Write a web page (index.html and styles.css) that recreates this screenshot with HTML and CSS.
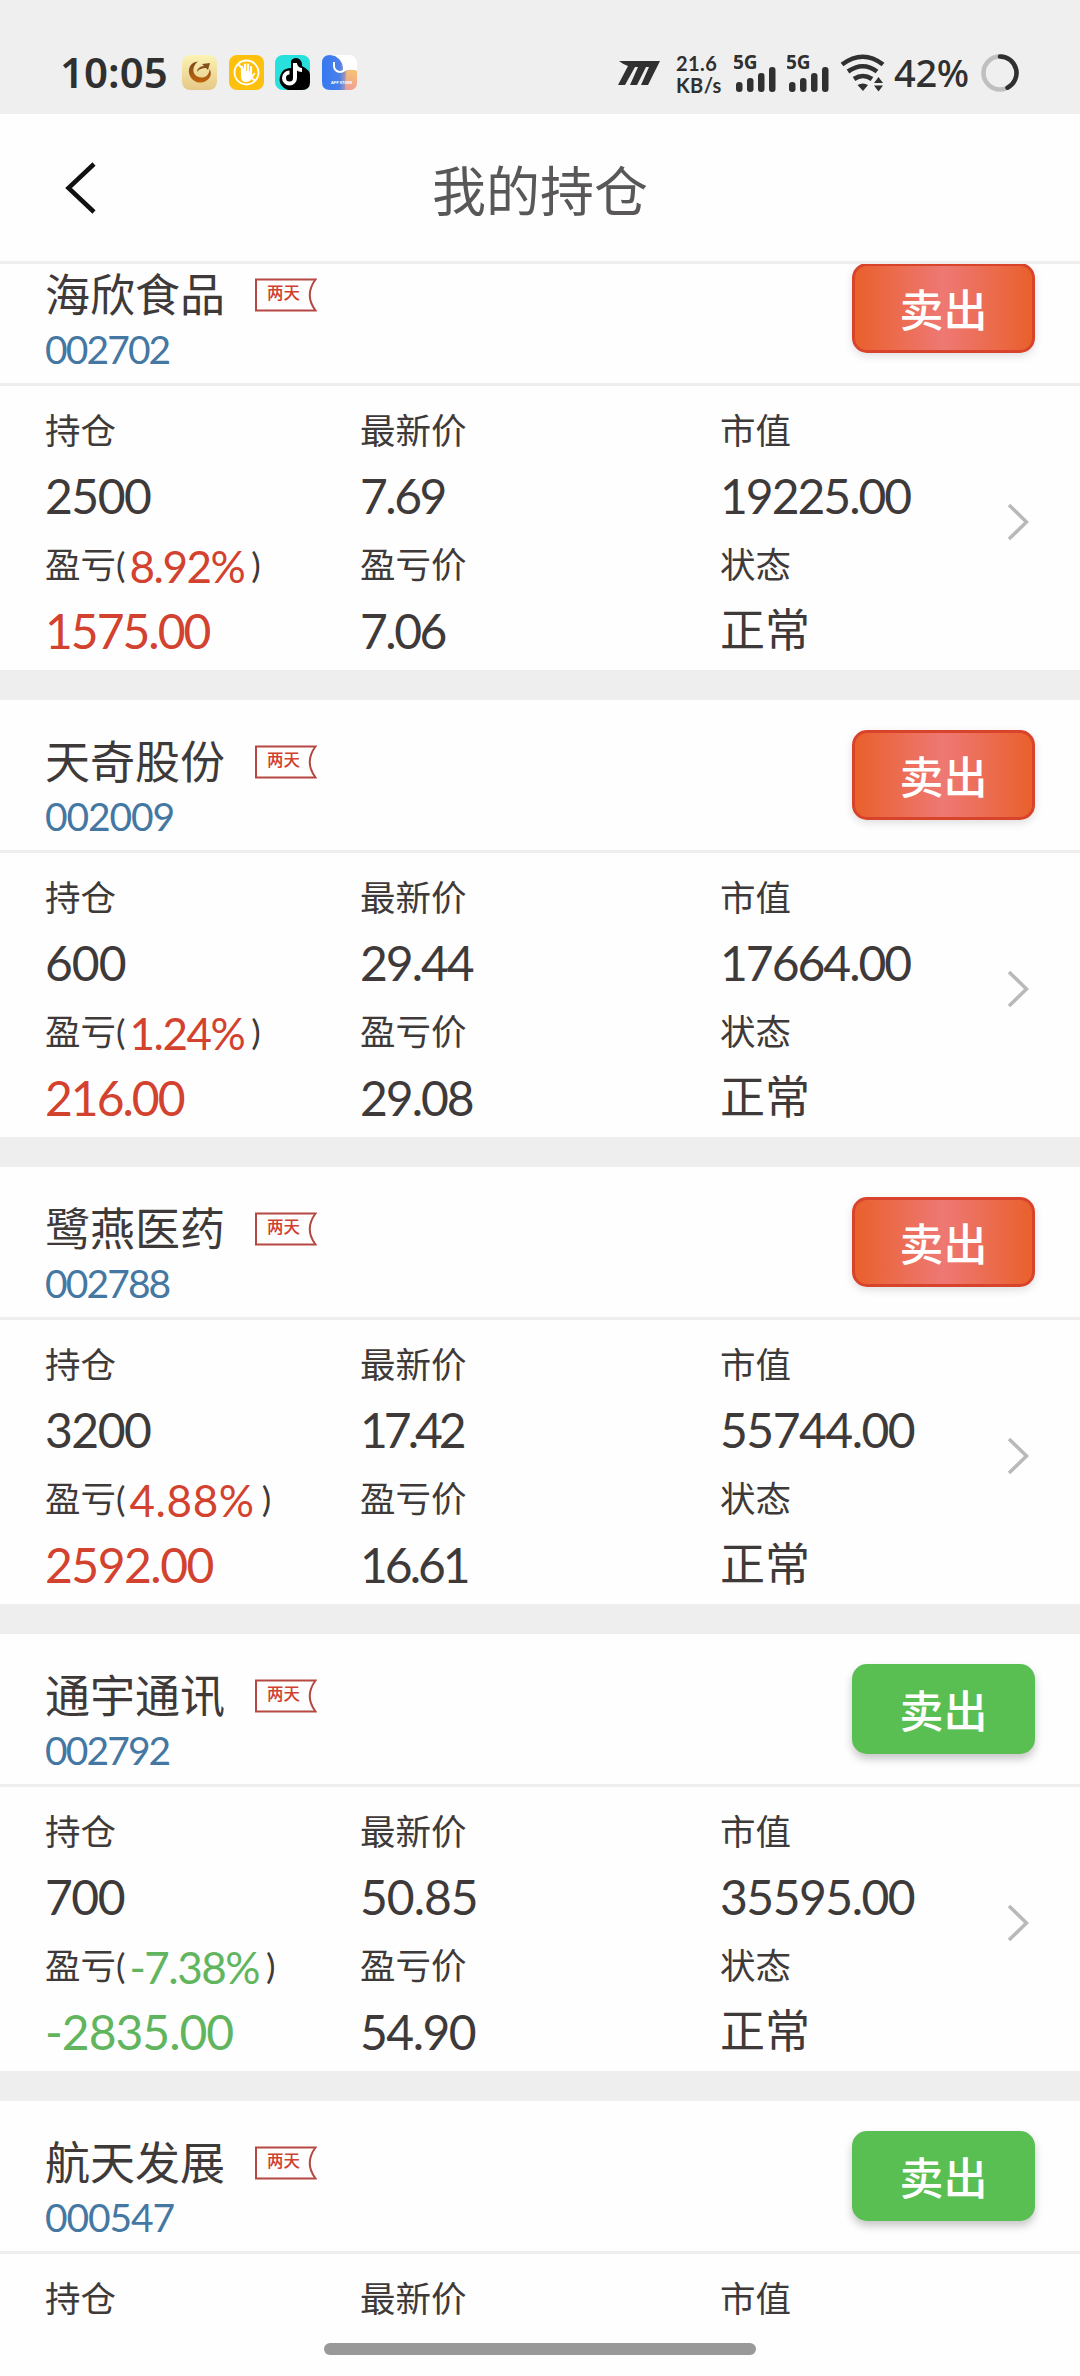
FILE: index.html
```html
<!DOCTYPE html>
<html lang="zh-CN">
<head>
<meta charset="utf-8">
<title>我的持仓</title>
<link rel="stylesheet" href="styles.css">
</head>
<body>
<svg width="0" height="0" class="defs">
  <defs>
    <linearGradient id="gold" x1="0" y1="0" x2="0" y2="1"><stop offset="0" stop-color="#fbf3b4"/><stop offset="1" stop-color="#e6c887"/></linearGradient>
    <linearGradient id="bronze" x1="0" y1="0" x2="0" y2="1"><stop offset="0" stop-color="#7c4a1c"/><stop offset="1" stop-color="#c0650e"/></linearGradient>
    <linearGradient id="store" x1="0" y1="0" x2="1" y2="0"><stop offset="0" stop-color="#3579f0"/><stop offset=".5" stop-color="#4a80ea"/><stop offset=".75" stop-color="#d8a09a"/><stop offset="1" stop-color="#f6a58e"/></linearGradient>
    <linearGradient id="peach" x1="0" y1="0" x2="0" y2="1"><stop offset="0" stop-color="#f8cf68"/><stop offset="1" stop-color="#f79b96"/></linearGradient>
    <symbol id="flag" viewBox="0 0 62 34"><path d="M1 1.5H60.5Q49 17 60.5 32.5H1Z" fill="none" stroke="#b54843" stroke-width="2"/></symbol>
    <symbol id="next" viewBox="0 0 22 38"><path d="M2 2 19.500 19 2 36" fill="none" stroke="#b9b9b9" stroke-width="3.500"/></symbol>
    <symbol id="signal" viewBox="0 0 44 38">
      <text x="-1" y="14" class="net">5G</text>
      <g fill="#303030"><rect x="2" y="27" width="6.500" height="10" rx="3"/><rect x="13" y="23" width="6.500" height="14" rx="3"/><rect x="24" y="18" width="6.500" height="19" rx="3"/><rect x="35" y="12" width="6.500" height="25" rx="3"/></g>
    </symbol>
  </defs>
</svg>
<div class="screen">
  <header class="status">
    <span class="clock">10:05</span>
    <div class="apps">
      <svg viewBox="0 0 35 35"><rect width="35" height="35" rx="8" fill="url(#gold)"/><path d="M16 6.500C9 7 6 13 7 18c1.500 8 10 12 17 8 5-3 6-8 3.500-12 0 5-3 8-7 8.500-6 .5-10-4-9-9 .5-3 2-5 4.500-7z" fill="url(#bronze)"/><path d="M15 17c0-3 3-6 7-6l-2-2 8-1-2 7-2-2c-4 0-7 1-9 4z" fill="#85501d"/></svg>
      <svg viewBox="0 0 35 35"><rect width="35" height="35" rx="8" fill="#fcc00d"/><circle cx="17.500" cy="17.500" r="12" fill="none" stroke="#fff" stroke-width="1.800"/><path d="M9 9 26 26" stroke="#fff" stroke-width="1.800"/><path d="M13 19v-7M16 18V9.500M19 18V9.500M22 19v-7" stroke="#fff" stroke-width="2.200" stroke-linecap="round"/><path d="M12 16h11v4l2-2q2-1 1 1l-4 6q-2 2-5 2-5 0-5-6z" fill="#fff"/></svg>
      <svg viewBox="0 0 35 35"><rect width="35" height="35" rx="8" fill="#28e0dc"/><path d="M16 6c4-6 12-2 11 5 3 2 8 4 8 9v7q0 8-8 8H13C5 32 2 25 7 17c2-3 6-4 9-4z" fill="#000"/><path d="M20 8v15a5.500 5.500 0 1 1-5.500-5.500M20 9c1 4 3 6 7 6" fill="none" stroke="#fff" stroke-width="4"/></svg>
      <svg viewBox="0 0 35 35"><rect width="35" height="35" rx="8" fill="#fff"/><path d="M8 0Q0 0 0 8v19q0 8 8 8h19q8 0 8-8V16q-7-3-14 1Q22 6 13 1z" fill="url(#store)"/><path d="M24 16q6-2 11 0v11q0 8-8 8h-4z" fill="url(#peach)" opacity=".75"/><path d="M12 7v4a6 6 0 0 0 12 0V8" fill="none" stroke="#fff" stroke-width="2"/><text x="9" y="29" class="tiny">APP STORE</text></svg>
    </div>
    <div class="indicators">
      <svg class="brand" viewBox="0 0 42 24"><path d="M1 0H42L30 24H23L31 6H28L19 24H12L20 6H17L7 24H0L10 5Q6 4 1 0Z" fill="#303030"/></svg>
      <div class="speed"><span>21.6</span><span>KB/s</span></div>
      <svg class="sig"><use href="#signal"/></svg>
      <svg class="sig"><use href="#signal"/></svg>
      <svg class="wifi" viewBox="0 0 46 38"><g fill="none" stroke="#303030" stroke-width="4.600"><path d="M2 10.500Q23-5 43 10.500"/><path d="M8 17.500Q23 7 37 17.500"/><path d="M14 25Q23 19 32 25"/></g><path d="M17.500 31Q23 28 28 31L23 37ZM34 29 38.500 23 43 29ZM34 31.500H43L38.500 37.500Z" fill="#303030"/></svg>
      <span class="battery">42%</span>
      <svg class="ring" viewBox="0 0 38 38"><circle cx="19" cy="19" r="16.500" fill="none" stroke="#bfbfbf" stroke-width="4.500"/><path d="M19 2.500A16.500 16.500 0 0 1 26.500 33.700" fill="none" stroke="#303030" stroke-width="4.500" stroke-linecap="round"/></svg>
    </div>
  </header>
  <nav class="bar">
    <svg class="back" viewBox="0 0 34 54"><path d="M30 3 4.500 27 30 51" fill="none" stroke="#111" stroke-width="4.500"/></svg>
    <h1>我的持仓</h1>
  </nav>
  <main class="list">
    <section class="card first">
      <div class="head"><div><div class="name">海欣食品<span class="tag"><svg><use href="#flag"/></svg><b>两天</b></span></div><div class="code">002702</div></div><button class="sell up">卖出</button></div>
      <div class="body">
        <dl><dt>持仓</dt><dd class="k15">2500</dd><dt>盈亏(<span class="pct red">8.92%</span>)</dt><dd class="red k2">1575.00</dd></dl>
        <dl><dt>最新价</dt><dd class="k25">7.69</dd><dt>盈亏价</dt><dd class="k25">7.06</dd></dl>
        <dl><dt>市值</dt><dd class="k2">19225.00</dd><dt>状态</dt><dd>正常</dd></dl>
        <svg class="next"><use href="#next"/></svg>
      </div>
    </section>
    <section class="card">
      <div class="head"><div><div class="name">天奇股份<span class="tag"><svg><use href="#flag"/></svg><b>两天</b></span></div><div class="code wide">002009</div></div><button class="sell up">卖出</button></div>
      <div class="body">
        <dl><dt>持仓</dt><dd class="k1">600</dd><dt>盈亏(<span class="pct red">1.24%</span>)</dt><dd class="red k2">216.00</dd></dl>
        <dl><dt>最新价</dt><dd class="k2">29.44</dd><dt>盈亏价</dt><dd class="k2">29.08</dd></dl>
        <dl><dt>市值</dt><dd class="k2">17664.00</dd><dt>状态</dt><dd>正常</dd></dl>
        <svg class="next"><use href="#next"/></svg>
      </div>
    </section>
    <section class="card">
      <div class="head"><div><div class="name">鹭燕医药<span class="tag"><svg><use href="#flag"/></svg><b>两天</b></span></div><div class="code">002788</div></div><button class="sell up">卖出</button></div>
      <div class="body">
        <dl><dt>持仓</dt><dd class="k15">3200</dd><dt>盈亏(<span class="pct loose red">4.88%</span>)</dt><dd class="red k15">2592.00</dd></dl>
        <dl><dt>最新价</dt><dd class="k4">17.42</dd><dt>盈亏价</dt><dd class="k3">16.61</dd></dl>
        <dl><dt>市值</dt><dd class="k15">55744.00</dd><dt>状态</dt><dd>正常</dd></dl>
        <svg class="next"><use href="#next"/></svg>
      </div>
    </section>
    <section class="card">
      <div class="head"><div><div class="name">通宇通讯<span class="tag"><svg><use href="#flag"/></svg><b>两天</b></span></div><div class="code">002792</div></div><button class="sell down">卖出</button></div>
      <div class="body">
        <dl><dt>持仓</dt><dd class="k15">700</dd><dt>盈亏(<span class="pct green">-7.38%</span>)</dt><dd class="green k1">-2835.00</dd></dl>
        <dl><dt>最新价</dt><dd class="k1">50.85</dd><dt>盈亏价</dt><dd class="k15">54.90</dd></dl>
        <dl><dt>市值</dt><dd class="k15">35595.00</dd><dt>状态</dt><dd>正常</dd></dl>
        <svg class="next"><use href="#next"/></svg>
      </div>
    </section>
    <section class="card">
      <div class="head"><div><div class="name">航天发展<span class="tag"><svg><use href="#flag"/></svg><b>两天</b></span></div><div class="code wide">000547</div></div><button class="sell down">卖出</button></div>
      <div class="body">
        <dl><dt>持仓</dt></dl>
        <dl><dt>最新价</dt></dl>
        <dl><dt>市值</dt></dl>
      </div>
    </section>
  </main>
  <div class="home"></div>
</div>
</body>
</html>
```
FILE: styles.css
```css
* { box-sizing: border-box; margin: 0; padding: 0; }
body { background: #fefefe; }
svg { display: block; flex: none; }
.defs { position: absolute; }
.screen {
  position: relative;
  display: flex;
  flex-direction: column;
  width: 1080px;
  height: 2376px;
  overflow: hidden;
  background: #fefefe;
  color: #3e3a39;
  font-family: Lato, "Noto Sans CJK SC", sans-serif;
}

.status {
  display: flex;
  align-items: center;
  flex: none;
  height: 114px;
  padding: 31px 61px 0 60px;
  background: #efefef;
  color: #303030;
  font-family: "Noto Sans", sans-serif;
}
.status > * { height: 83px; }
.clock { width: 122px; font-size: 42px; line-height: 82px; font-weight: 600; }
.apps { display: flex; gap: 11.500px; padding-top: 24px; }
.apps svg { width: 35px; height: 35px; }
.tiny { font: 700 4px "Noto Sans", sans-serif; fill: #fff; }
.indicators { display: flex; margin-left: auto; }
.brand { width: 42px; height: 24px; margin: 30px 16px 0 0; }
.speed { display: flex; flex-direction: column; width: 58px; padding-top: 21px; font: 700 20px/22px Lato, sans-serif; letter-spacing: .4px; }
.net { font: 700 19px "Noto Sans", sans-serif; fill: #303030; }
.sig { width: 44px; height: 38px; margin: 24px 9px 0 0; }
.wifi { width: 46px; height: 38px; margin: 23px 8px 0 0; }
.battery { width: 87px; font-size: 38px; line-height: 83px; font-weight: 500; letter-spacing: -.3px; }
.ring { width: 38px; height: 38px; margin-top: 23px; }

.bar {
  display: grid;
  grid-template-columns: 64px 1fr 64px;
  align-items: center;
  flex: none;
  height: 150px;
  border-bottom: 3px solid #eee;
}
.back { width: 34px; height: 54px; margin-left: 64px; }
.bar h1 { font-size: 54px; line-height: 80px; font-weight: 400; color: #595757; text-align: center; padding-top: 9px; }

.list { flex: 1; overflow: hidden; }
.card { height: 467px; border-bottom: 30px solid #eee; }
.first { margin-top: -31px; }
.head {
  display: flex;
  justify-content: space-between;
  height: 153px;
  padding: 30px 45px 0 45px;
  border-bottom: 3px solid #eee;
}
.name { display: flex; align-items: center; gap: 30px; height: 62px; padding-top: 1px; font-size: 45px; line-height: 64px; }
.tag { display: grid; width: 62px; height: 34px; }
.tag > * { grid-area: 1 / 1; }
.tag svg { width: 62px; height: 34px; }
.tag b { padding-left: 12px; font-size: 16.500px; line-height: 31px; font-weight: 500; color: #d1402e; }
.code { font-size: 39px; line-height: 49px; letter-spacing: -1.900px; color: #4577a3; }
.wide { letter-spacing: -1.100px; }
.sell {
  width: 183px;
  height: 90px;
  border: 0;
  border-radius: 15px;
  color: #fff;
  font: 500 44px/88px "Noto Sans CJK SC", sans-serif;
  box-shadow: 0 5px 9px rgba(0, 0, 0, .22);
}
.up { border: 3px solid #d8432b; background: linear-gradient(90deg, #e9602c, #ee7874 50%, #e9602c); line-height: 82px; box-shadow: 0 3px 8px rgba(0, 0, 0, .13); }
.down { background: #5abf53; }
.body {
  display: grid;
  grid-template-columns: 315px 360px 287px 22px;
  padding: 12px 0 0 45px;
}
dt { height: 66px; font-size: 35.500px; line-height: 66px; white-space: nowrap; }
dd { height: 67px; font-size: 48px; line-height: 63px; white-space: nowrap; }
dl:nth-child(3) dd:last-child { font-size: 45px; }
dd + dt { display: flex; height: 68px; line-height: 68px; }
.next { width: 22px; height: 38px; margin-top: 105px; }
.pct { margin: 0 7px 0 4px; font-size: 44px; line-height: 71px; letter-spacing: -1.500px; }
.loose { letter-spacing: .6px; }
.red { color: #d2422e; }
.green { color: #61b55e; }
.k1 { letter-spacing: -1px; }
.k15 { letter-spacing: -1.500px; }
.k2 { letter-spacing: -2px; }
.k25 { letter-spacing: -2.500px; }
.k3 { letter-spacing: -3px; }
.k4 { letter-spacing: -4px; }
.home {
  position: absolute;
  left: 324px;
  bottom: 21px;
  width: 432px;
  height: 12px;
  border-radius: 6px;
  background: #999;
}
```
